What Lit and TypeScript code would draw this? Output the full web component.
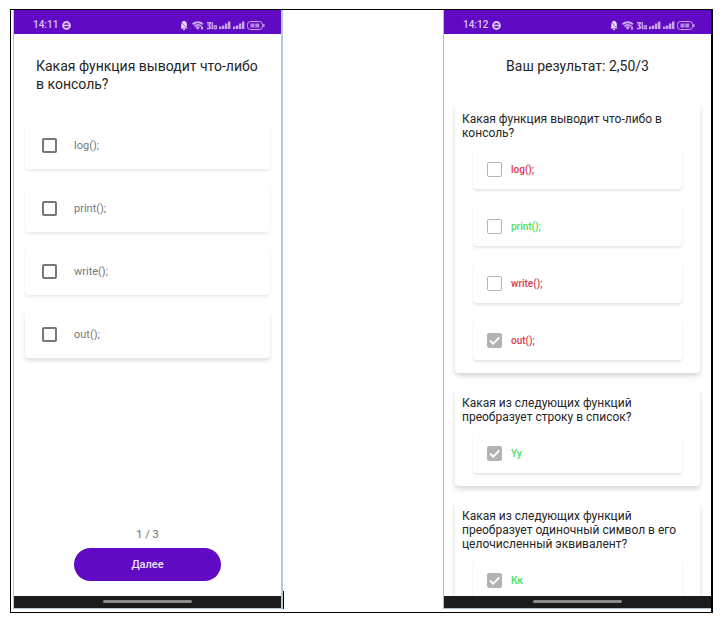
import { LitElement, html, css, svg, nothing } from "lit";
import { customElement, property } from "lit/decorators.js";

interface Option {
  label: string;
  checked?: boolean;
  correct?: boolean;
}

interface Question {
  title: string;
  options: Option[];
}

const QUESTION = "Какая функция выводит что-либо в консоль?";

const RESULTS: Question[] = [
  {
    title: QUESTION,
    options: [
      { label: "log();" },
      { label: "print();", correct: true },
      { label: "write();" },
      { label: "out();", checked: true },
    ],
  },
  {
    title: "Какая из следующих функций преобразует строку в список?",
    options: [{ label: "Yy", checked: true, correct: true }],
  },
  {
    title:
      "Какая из следующих функций преобразует одиночный символ в его целочисленный эквивалент?",
    options: [{ label: "Кк", checked: true, correct: true }],
  },
];

const checkboxStyles = css`
  input {
    appearance: none;
    box-sizing: border-box;
    flex: none;
    width: 15px;
    height: 15px;
    margin: 0;
    border: 2px solid #777;
    border-radius: 2px;
    background: #fff;
  }
  input:disabled {
    border: 1px solid #b4b4b4;
  }
  input:disabled:checked {
    border-color: #b2b2b2;
    background: #b2b2b2;
  }
  .text {
    padding-top: 2px;
  }
  .box {
    position: relative;
    display: flex;
    flex: none;
  }
  .tick {
    position: absolute;
    inset: 0;
    width: 15px;
    height: 15px;
    pointer-events: none;
  }
`;

@customElement("phone-frame")
class PhoneFrame extends LitElement {
  @property() time = "";

  static styles = css`
    :host {
      display: flex;
      flex-direction: column;
      min-width: 0;
      overflow: hidden;
      box-sizing: border-box;
    }
    .status {
      display: flex;
      flex: none;
      align-items: center;
      justify-content: space-between;
      height: 24px;
      padding: 6px 16px 0 19px;
      box-sizing: border-box;
      background: #610ac4;
      color: #dcc6f5;
      font: 500 10px/12px Roboto, sans-serif;
    }
    .clock {
      display: flex;
      align-items: center;
      gap: 4px;
    }
    svg {
      display: block;
    }
    .content {
      display: flex;
      flex: 1;
      flex-direction: column;
      min-height: 0;
      overflow: hidden;
    }
    .nav {
      display: flex;
      flex: none;
      justify-content: center;
      height: 12px;
      padding-top: 4px;
      box-sizing: border-box;
      background: #1b1b1d;
    }
    .handle {
      width: 33%;
      height: 3px;
      border-radius: 2px;
      background: #8a8a8a;
    }
  `;

  private signal(x: number) {
    return svg`<path d="M${x} 9V6.500h2.400V9zM${x + 3} 9V5.500h2.400V9zM${x + 6} 9V3.500h2.400V9zM${x + 9} 9V1.500h2.400V9z" />`;
  }

  render() {
    return html`
      <div class="status">
        <div class="clock">
          <span>${this.time}</span>
          <svg width="9" height="9" viewBox="0 0 9 9" aria-hidden="true">
            <circle cx="4.500" cy="4.500" r="3.500" fill="none" stroke="#dcc6f5" stroke-width="1.800" />
            <path d="M2 3.700h5v1.500H2z" fill="#dcc6f5" />
          </svg>
        </div>
        <svg width="85" height="11" viewBox="0 0 85 11" fill="#c9a8ee" aria-hidden="true">
          <path d="M4 .8C2.200 1.200 1.300 2.500 1.300 4.200V7L.4 8.500h7.200L6.800 7V4.200C6.800 2.500 5.900 1.200 4 .8zM2.800 9a1.200 1.200 0 0 0 2.400 0z" fill="#eadcfa" />
          <path d="M1 1.500l6 7" stroke="#610ac4" stroke-width=".6" />
          <path d="M12.600 4.200a7.500 7.500 0 0 1 10.200 0M14.400 6.200a4.800 4.800 0 0 1 6.600 0" fill="none" stroke="#c9a8ee" stroke-width="1.900" />
          <path d="M15.600 7.400a3 3 0 0 1 4.200 0l-2.100 2.300z" />
          <path d="M21 6.500h2v3h-2z" />
          <path d="M27 2h4v2l-1.200 1.200L31 6.500v1.700L30 9.200h-3V7.800h2V5.800h-1.500v-1.200h1.500v-1.100h-2zM31.600 2H33v7.200h-1.400zM33.600 5.200H37v4h-3.400zM34.700 6.500v1.500h1V6.500z" fill-rule="evenodd" />
          ${this.signal(39)} ${this.signal(53)}
          <rect x="67.500" y="1.500" width="15" height="8" rx="3" fill="none" stroke="#c9a8ee" />
          <path d="M70.500 3.500h4v4h-4zM75.300 3.500h4v4h-4z" opacity=".8" />
          <path d="M83.200 4h1.300v3h-1.300z" />
        </svg>
      </div>
      <div class="content"><slot></slot></div>
      <div class="nav"><div class="handle"></div></div>
    `;
  }
}

@customElement("quiz-page")
class QuizPage extends LitElement {
  static styles = [
    checkboxStyles,
    css`
      :host {
        display: flex;
        flex: 1;
        flex-direction: column;
        padding: 23px 11px 15px;
        font-family: Roboto, sans-serif;
      }
      h1 {
        margin: 0 0 28px;
        padding: 0 11px;
        color: #262626;
        font-size: 14px;
        font-weight: 400;
        line-height: 18px;
      }
      .options {
        display: flex;
        flex-direction: column;
        gap: 15px;
      }
      label {
        display: flex;
        align-items: center;
        gap: 17px;
        height: 48px;
        padding: 0 17px;
        border-radius: 4px;
        color: #777;
        font-size: 11px;
        line-height: 16px;
        box-shadow: 0 2px 3px rgba(0, 0, 0, 0.08);
      }
      label:last-child {
        box-shadow: 0 3px 4px rgba(0, 0, 0, 0.12);
      }
      .footer {
        display: flex;
        flex-direction: column;
        align-items: center;
        gap: 5px;
        margin-top: auto;
      }
      .count {
        color: #6c6c6c;
        font-size: 11px;
        line-height: 16px;
      }
      button {
        width: 60%;
        height: 33px;
        border: 0;
        border-radius: 17px;
        background: #610ac4;
        color: #efe4fb;
        font: 500 11px/16px Roboto, sans-serif;
      }
    `,
  ];

  render() {
    return html`
      <h1>${QUESTION}</h1>
      <div class="options">
        ${RESULTS[0].options.map(
          (o) => html`<label>
            <input type="checkbox" />
            <span class="text">${o.label}</span>
          </label>`,
        )}
      </div>
      <div class="footer">
        <span class="count">1 / 3</span>
        <button type="button">Далее</button>
      </div>
    `;
  }
}

@customElement("result-page")
class ResultPage extends LitElement {
  static styles = [
    checkboxStyles,
    css`
      :host {
        display: flex;
        flex-direction: column;
        gap: 15px;
        padding: 22px 11px 0;
        font-family: Roboto, sans-serif;
      }
      h1 {
        margin: 0 0 13px;
        color: #262626;
        font-size: 14px;
        font-weight: 400;
        line-height: 20px;
        text-align: center;
      }
      section {
        display: flex;
        flex: none;
        flex-direction: column;
        padding: 8px 18px 13px;
        border-radius: 4px;
        box-shadow: 0 3px 5px rgba(0, 0, 0, 0.16);
      }
      h2 {
        margin: 0 -11px 9px;
        color: #262626;
        font-size: 12px;
        font-weight: 400;
        line-height: 14px;
      }
      .options {
        display: flex;
        flex-direction: column;
        gap: 17px;
      }
      label {
        display: flex;
        align-items: center;
        gap: 9px;
        height: 40px;
        padding: 0 14px;
        border-radius: 4px;
        color: #d93a4a;
        font-size: 10px;
        font-weight: 500;
        line-height: 16px;
        box-shadow: 0 2px 3px rgba(0, 0, 0, 0.1);
      }
      .correct {
        color: #48e060;
      }
    `,
  ];

  render() {
    return html`
      <h1>Ваш результат: 2,50/3</h1>
      ${RESULTS.map(
        (q) => html`
          <section>
            <h2>${q.title}</h2>
            <div class="options">
              ${q.options.map(
                (o) => html`
                  <label class=${o.correct ? "correct" : "wrong"}>
                    <span class="box">
                      <input type="checkbox" disabled ?checked=${o.checked} />
                      ${o.checked
                        ? html`<svg class="tick" viewBox="0 0 15 15" aria-hidden="true">
                            <path d="M3 7.500l3.200 3.200L12.300 4.500" fill="none" stroke="#fff" stroke-width="1.800" />
                          </svg>`
                        : nothing}
                    </span>
                    <span class="text">${o.label}</span>
                  </label>
                `,
              )}
            </div>
          </section>
        `,
      )}
    `;
  }
}

@customElement("app-root")
class AppRoot extends LitElement {
  static styles = css`
    :host {
      display: block;
      height: 100vh;
      padding: 9px 13px 9px 10px;
      box-sizing: border-box;
      background: #fff;
    }
    .sheet {
      display: grid;
      grid-template-columns: 270fr 160fr 268fr;
      grid-template-rows: minmax(0, 1fr);
      height: 100%;
      padding: 0 0 3px 2px;
      box-sizing: border-box;
      border: solid #000;
      border-width: 1px 2px 1px 1px;
    }
    .quiz {
      border: solid #b5cbdc;
      border-width: 0 2px 1px 1px;
    }
    .gutter {
      align-self: end;
      width: 1px;
      height: 18px;
      background: #000;
    }
    .result {
      border: solid #a9c3d6;
      border-width: 0 0 1px 1px;
    }
  `;

  render() {
    return html`
      <main class="sheet">
        <phone-frame class="quiz" time="14:11"><quiz-page></quiz-page></phone-frame>
        <div class="gutter"></div>
        <phone-frame class="result" time="14:12"><result-page></result-page></phone-frame>
      </main>
    `;
  }
}
